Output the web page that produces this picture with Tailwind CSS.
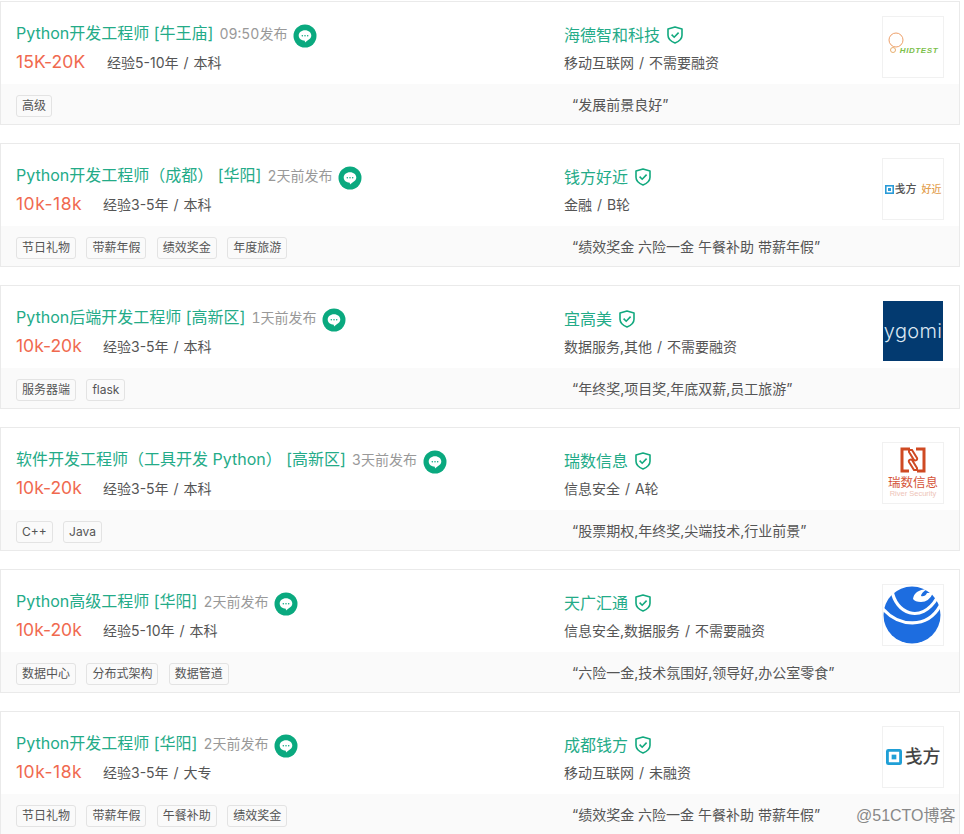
<!DOCTYPE html>
<html lang="zh"><head><meta charset="utf-8"><script src="https://cdn.jsdelivr.net/npm/@tailwindcss/browser@4"></script></head>
<body class="bg-white overflow-hidden font-['Inter','Noto_Sans_CJK_SC',sans-serif] text-[#555]">
<div class="relative h-[834px] w-[964px] overflow-hidden pt-px">
<svg class="hidden"><defs>
<symbol id="chat" viewBox="0 0 24 24"><circle cx="12" cy="12" r="11.5" fill="#0aa97f"/><path d="M12 6.3c-3.6 0-6.3 2.4-6.3 5.3 0 2.9 2.7 5.2 6.1 5.2l.2 1.8 2.8-2.4c2.1-.8 3.5-2.5 3.5-4.6 0-2.9-2.7-5.3-6.3-5.3z" fill="#fff"/><circle cx="9.3" cy="11.7" r=".75" fill="#0aa97f"/><circle cx="12" cy="11.7" r=".75" fill="#0aa97f"/><circle cx="14.7" cy="11.7" r=".75" fill="#0aa97f"/></symbol>
<symbol id="shield" viewBox="0 0 16 18"><path d="M8 1 15 3v6.2c0 3.8-3.3 6.3-7 7.8-3.7-1.5-7-4-7-7.8V3z" fill="none" stroke="#12a97f" stroke-width="1.6" stroke-linejoin="round"/><path d="M4.6 8.6 7.2 11.2l4.4-4.6" fill="none" stroke="#12a97f" stroke-width="1.6"/></symbol>
</defs></svg>

<!-- card 1 -->
<div class="mb-[18px] flex h-[124px] w-[960px] flex-col border border-[#eaeaea]">
  <div class="flex h-[82px] shrink-0">
    <div class="w-[563px] shrink-0 pl-[15px] pt-[19px]">
      <div class="flex h-[24px] items-center"><span class="text-[16px] text-[#24ab88]">Python开发工程师 [牛王庙]</span><span class="ml-[6px] text-[14px] tabular-nums text-[#999]">09:50发布</span><svg class="ml-[6px] mt-[6px] h-[24px] w-[24px]"><use href="#chat"/></svg></div>
      <div class="mt-[5px] flex h-[24px] items-center"><span class="w-[70px] shrink-0 whitespace-nowrap text-[17.5px] tracking-[0.1px] text-[#f0694f]">15K-20K</span><span class="ml-[21px] text-[14px] [word-spacing:1px]">经验5-10年 / 本科</span></div>
    </div>
    <div class="w-[318px] shrink-0 pt-[19px]">
      <div class="flex h-[24px] items-center text-[16px] text-[#24ab88]"><span class="mt-[3px]">海德智和科技</span><svg class="ml-[7px] mt-[3px] h-[18px] w-[16px]"><use href="#shield"/></svg></div>
      <div class="mt-[5px] flex h-[24px] items-center text-[14px] [word-spacing:1px]">移动互联网 / 不需要融资</div>
    </div>
    <div class="mt-[14px] flex h-[62px] w-[62px] shrink-0 items-center justify-center border border-[#f1f1f1]"><svg class="mb-[8px] mr-[-4px] h-[22px] w-[16px] shrink-0" viewBox="0 0 16 22"><circle cx="8" cy="8" r="7" fill="none" stroke="#eea06a"/><circle cx="5" cy="18" r="2.5" fill="none" stroke="#e8b070"/></svg><span class="mt-[8px] font-['Liberation_Sans'] text-[8px] font-bold italic leading-none tracking-[0.6px] text-[#7cc04b]">HIDTEST</span></div>
  </div>
  <div class="flex flex-1 items-center bg-[#fafafa]">
    <div class="flex w-[563px] shrink-0 gap-[10.4px] pl-[15px] pt-[3px]"><span class="flex h-[22px] items-center rounded-[3px] border border-[#e3e3e3] px-[5px] text-[12px]">高级</span></div>
    <div class="pl-[8px] text-[14px]">“发展前景良好”</div>
  </div>
</div>

<!-- card 2 -->
<div class="mb-[18px] flex h-[124px] w-[960px] flex-col border border-[#eaeaea]">
  <div class="flex h-[82px] shrink-0">
    <div class="w-[563px] shrink-0 pl-[15px] pt-[19px]">
      <div class="flex h-[24px] items-center"><span class="text-[16px] text-[#24ab88]">Python开发工程师（成都） [华阳]</span><span class="ml-[6px] text-[14px] tabular-nums text-[#999]">2天前发布</span><svg class="ml-[6px] mt-[6px] h-[24px] w-[24px]"><use href="#chat"/></svg></div>
      <div class="mt-[5px] flex h-[24px] items-center"><span class="w-[66px] shrink-0 whitespace-nowrap text-[17.5px] tracking-[0.5px] text-[#f0694f]">10k-18k</span><span class="ml-[21px] text-[14px] [word-spacing:1px]">经验3-5年 / 本科</span></div>
    </div>
    <div class="w-[318px] shrink-0 pt-[19px]">
      <div class="flex h-[24px] items-center text-[16px] text-[#24ab88]"><span class="mt-[3px]">钱方好近</span><svg class="ml-[7px] mt-[3px] h-[18px] w-[16px]"><use href="#shield"/></svg></div>
      <div class="mt-[5px] flex h-[24px] items-center text-[14px] [word-spacing:1px]">金融 / B轮</div>
    </div>
    <div class="mt-[14px] flex h-[62px] w-[62px] shrink-0 items-center justify-center border border-[#f1f1f1]"><svg class="h-[9px] w-[9px] shrink-0" viewBox="0 0 9 9"><rect x=".8" y=".8" width="7.4" height="7.4" fill="none" stroke="#2a9bd8" stroke-width="1.6"/><rect x="3" y="3" width="3" height="3" fill="#2a9bd8"/></svg><span class="ml-px text-[11px] font-medium leading-none text-[#555]">戋方</span><span class="ml-[5px] text-[10px] font-medium leading-none text-[#e3a04f]">好近</span></div>
  </div>
  <div class="flex flex-1 items-center bg-[#fafafa]">
    <div class="flex w-[563px] shrink-0 gap-[10.4px] pl-[15px] pt-[3px]"><span class="flex h-[22px] items-center rounded-[3px] border border-[#e3e3e3] px-[5px] text-[12px]">节日礼物</span><span class="flex h-[22px] items-center rounded-[3px] border border-[#e3e3e3] px-[5px] text-[12px]">带薪年假</span><span class="flex h-[22px] items-center rounded-[3px] border border-[#e3e3e3] px-[5px] text-[12px]">绩效奖金</span><span class="flex h-[22px] items-center rounded-[3px] border border-[#e3e3e3] px-[5px] text-[12px]">年度旅游</span></div>
    <div class="pl-[8px] text-[14px]">“绩效奖金 六险一金 午餐补助 带薪年假”</div>
  </div>
</div>

<!-- card 3 -->
<div class="mb-[18px] flex h-[124px] w-[960px] flex-col border border-[#eaeaea]">
  <div class="flex h-[82px] shrink-0">
    <div class="w-[563px] shrink-0 pl-[15px] pt-[19px]">
      <div class="flex h-[24px] items-center"><span class="text-[16px] text-[#24ab88]">Python后端开发工程师 [高新区]</span><span class="ml-[6px] text-[14px] tabular-nums text-[#999]">1天前发布</span><svg class="ml-[6px] mt-[6px] h-[24px] w-[24px]"><use href="#chat"/></svg></div>
      <div class="mt-[5px] flex h-[24px] items-center"><span class="w-[66px] shrink-0 whitespace-nowrap text-[17.5px] text-[#f0694f]">10k-20k</span><span class="ml-[21px] text-[14px] [word-spacing:1px]">经验3-5年 / 本科</span></div>
    </div>
    <div class="w-[318px] shrink-0 pt-[19px]">
      <div class="flex h-[24px] items-center text-[16px] text-[#24ab88]"><span class="mt-[3px]">宜高美</span><svg class="ml-[7px] mt-[3px] h-[18px] w-[16px]"><use href="#shield"/></svg></div>
      <div class="mt-[5px] flex h-[24px] items-center text-[14px] [word-spacing:1px]">数据服务,其他 / 不需要融资</div>
    </div>
    <div class="ml-px mt-[15px] flex h-[60px] w-[60px] shrink-0 items-center justify-center overflow-hidden bg-[#033a70] text-[20px] font-light leading-none tracking-[0.3px] text-[#dbe7f2]">ygomi</div>
  </div>
  <div class="flex flex-1 items-center bg-[#fafafa]">
    <div class="flex w-[563px] shrink-0 gap-[10.4px] pl-[15px] pt-[3px]"><span class="flex h-[22px] items-center rounded-[3px] border border-[#e3e3e3] px-[5px] text-[12px]">服务器端</span><span class="flex h-[22px] items-center rounded-[3px] border border-[#e3e3e3] px-[5px] text-[12px]">flask</span></div>
    <div class="pl-[8px] text-[14px]">“年终奖,项目奖,年底双薪,员工旅游”</div>
  </div>
</div>

<!-- card 4 -->
<div class="mb-[18px] flex h-[124px] w-[960px] flex-col border border-[#eaeaea]">
  <div class="flex h-[82px] shrink-0">
    <div class="w-[563px] shrink-0 pl-[15px] pt-[19px]">
      <div class="flex h-[24px] items-center"><span class="text-[16px] text-[#24ab88]">软件开发工程师（工具开发 Python） [高新区]</span><span class="ml-[6px] text-[14px] tabular-nums text-[#999]">3天前发布</span><svg class="ml-[6px] mt-[6px] h-[24px] w-[24px]"><use href="#chat"/></svg></div>
      <div class="mt-[5px] flex h-[24px] items-center"><span class="w-[66px] shrink-0 whitespace-nowrap text-[17.5px] text-[#f0694f]">10k-20k</span><span class="ml-[21px] text-[14px] [word-spacing:1px]">经验3-5年 / 本科</span></div>
    </div>
    <div class="w-[318px] shrink-0 pt-[19px]">
      <div class="flex h-[24px] items-center text-[16px] text-[#24ab88]"><span class="mt-[3px]">瑞数信息</span><svg class="ml-[7px] mt-[3px] h-[18px] w-[16px]"><use href="#shield"/></svg></div>
      <div class="mt-[5px] flex h-[24px] items-center text-[14px] [word-spacing:1px]">信息安全 / A轮</div>
    </div>
    <div class="mt-[14px] flex h-[62px] w-[62px] shrink-0 flex-col items-center border border-[#f1f1f1] pt-[4px]"><svg class="h-[26px] w-[26px] shrink-0" viewBox="0 0 26 26"><path d="M10 2H2v22h7M16 2h8v22h-7" fill="none" stroke="#cf4a23" stroke-width="3"/><path d="M9 3h3l5 8c1 2-2 3-3 2L9 5zM17 23h-3l-5-8c-1-2 2-3 3-2l5 8z" fill="none" stroke="#cf4a23" stroke-width="2"/></svg><span class="mt-[3px] whitespace-nowrap text-[12.5px] leading-[14px] text-[#d5563a]">瑞数信息</span><span class="whitespace-nowrap font-['Liberation_Sans'] text-[7.5px] leading-[8px] text-[#eec4b8]">River Security</span></div>
  </div>
  <div class="flex flex-1 items-center bg-[#fafafa]">
    <div class="flex w-[563px] shrink-0 gap-[10.4px] pl-[15px] pt-[3px]"><span class="flex h-[22px] items-center rounded-[3px] border border-[#e3e3e3] px-[5px] text-[12px]">C++</span><span class="flex h-[22px] items-center rounded-[3px] border border-[#e3e3e3] px-[5px] text-[12px]">Java</span></div>
    <div class="pl-[8px] text-[14px]">“股票期权,年终奖,尖端技术,行业前景”</div>
  </div>
</div>

<!-- card 5 -->
<div class="mb-[18px] flex h-[124px] w-[960px] flex-col border border-[#eaeaea]">
  <div class="flex h-[82px] shrink-0">
    <div class="w-[563px] shrink-0 pl-[15px] pt-[19px]">
      <div class="flex h-[24px] items-center"><span class="text-[16px] text-[#24ab88]">Python高级工程师 [华阳]</span><span class="ml-[6px] text-[14px] tabular-nums text-[#999]">2天前发布</span><svg class="ml-[6px] mt-[6px] h-[24px] w-[24px]"><use href="#chat"/></svg></div>
      <div class="mt-[5px] flex h-[24px] items-center"><span class="w-[66px] shrink-0 whitespace-nowrap text-[17.5px] text-[#f0694f]">10k-20k</span><span class="ml-[21px] text-[14px] [word-spacing:1px]">经验5-10年 / 本科</span></div>
    </div>
    <div class="w-[318px] shrink-0 pt-[19px]">
      <div class="flex h-[24px] items-center text-[16px] text-[#24ab88]"><span class="mt-[3px]">天广汇通</span><svg class="ml-[7px] mt-[3px] h-[18px] w-[16px]"><use href="#shield"/></svg></div>
      <div class="mt-[5px] flex h-[24px] items-center text-[14px] [word-spacing:1px]">信息安全,数据服务 / 不需要融资</div>
    </div>
    <div class="mt-[14px] h-[62px] w-[62px] shrink-0 border border-[#f1f1f1]"><svg class="h-full w-full" viewBox="0 0 60 60"><circle cx="29" cy="30" r="28.5" fill="#1d6de0"/><path d="M42 0H60V15L50 8z" fill="#fff"/><path d="M9 5C12 28 38 40 54 13" fill="none" stroke="#fff" stroke-width="3.2"/><path d="M0 24C16 42 44 44 57 21" fill="none" stroke="#fff" stroke-width="3.2"/><path d="M30 14Q31 5 44 4Q38 8 38 11Q42 12 44 8L50 8Q46 17 38 17Q32 17 30 14z" fill="#fff"/></svg></div>
  </div>
  <div class="flex flex-1 items-center bg-[#fafafa]">
    <div class="flex w-[563px] shrink-0 gap-[10.4px] pl-[15px] pt-[3px]"><span class="flex h-[22px] items-center rounded-[3px] border border-[#e3e3e3] px-[5px] text-[12px]">数据中心</span><span class="flex h-[22px] items-center rounded-[3px] border border-[#e3e3e3] px-[5px] text-[12px]">分布式架构</span><span class="flex h-[22px] items-center rounded-[3px] border border-[#e3e3e3] px-[5px] text-[12px]">数据管道</span></div>
    <div class="pl-[8px] text-[14px]">“六险一金,技术氛围好,领导好,办公室零食”</div>
  </div>
</div>

<!-- card 6 -->
<div class="flex h-[124px] w-[960px] flex-col border border-[#eaeaea]">
  <div class="flex h-[82px] shrink-0">
    <div class="w-[563px] shrink-0 pl-[15px] pt-[19px]">
      <div class="flex h-[24px] items-center"><span class="text-[16px] text-[#24ab88]">Python开发工程师 [华阳]</span><span class="ml-[6px] text-[14px] tabular-nums text-[#999]">2天前发布</span><svg class="ml-[6px] mt-[6px] h-[24px] w-[24px]"><use href="#chat"/></svg></div>
      <div class="mt-[5px] flex h-[24px] items-center"><span class="w-[66px] shrink-0 whitespace-nowrap text-[17.5px] tracking-[0.5px] text-[#f0694f]">10k-18k</span><span class="ml-[21px] text-[14px] [word-spacing:1px]">经验3-5年 / 大专</span></div>
    </div>
    <div class="w-[318px] shrink-0 pt-[19px]">
      <div class="flex h-[24px] items-center text-[16px] text-[#24ab88]"><span class="mt-[3px]">成都钱方</span><svg class="ml-[7px] mt-[3px] h-[18px] w-[16px]"><use href="#shield"/></svg></div>
      <div class="mt-[5px] flex h-[24px] items-center text-[14px] [word-spacing:1px]">移动互联网 / 未融资</div>
    </div>
    <div class="mt-[14px] flex h-[62px] w-[62px] shrink-0 items-center justify-center border border-[#f1f1f1]"><svg class="h-[16px] w-[16px] shrink-0" viewBox="0 0 17 17"><rect x="1.5" y="1.5" width="14" height="14" rx="1" fill="none" stroke="#1f9fd6" stroke-width="3"/><rect x="6" y="6" width="5" height="5" fill="#1f9fd6"/></svg><span class="ml-[3px] text-[18px] font-medium leading-none text-[#444]">戋方</span></div>
  </div>
  <div class="flex flex-1 items-center bg-[#fafafa]">
    <div class="flex w-[563px] shrink-0 gap-[10.4px] pl-[15px] pt-[3px]"><span class="flex h-[22px] items-center rounded-[3px] border border-[#e3e3e3] px-[5px] text-[12px]">节日礼物</span><span class="flex h-[22px] items-center rounded-[3px] border border-[#e3e3e3] px-[5px] text-[12px]">带薪年假</span><span class="flex h-[22px] items-center rounded-[3px] border border-[#e3e3e3] px-[5px] text-[12px]">午餐补助</span><span class="flex h-[22px] items-center rounded-[3px] border border-[#e3e3e3] px-[5px] text-[12px]">绩效奖金</span></div>
    <div class="pl-[8px] text-[14px]">“绩效奖金 六险一金 午餐补助 带薪年假”</div>
  </div>
</div>

<div class="absolute left-[856px] top-[807px] font-['Liberation_Sans','Noto_Sans_CJK_SC',sans-serif] text-[16px] leading-[18px] text-[#888]">@51CTO博客</div>
</div>
</body></html>
